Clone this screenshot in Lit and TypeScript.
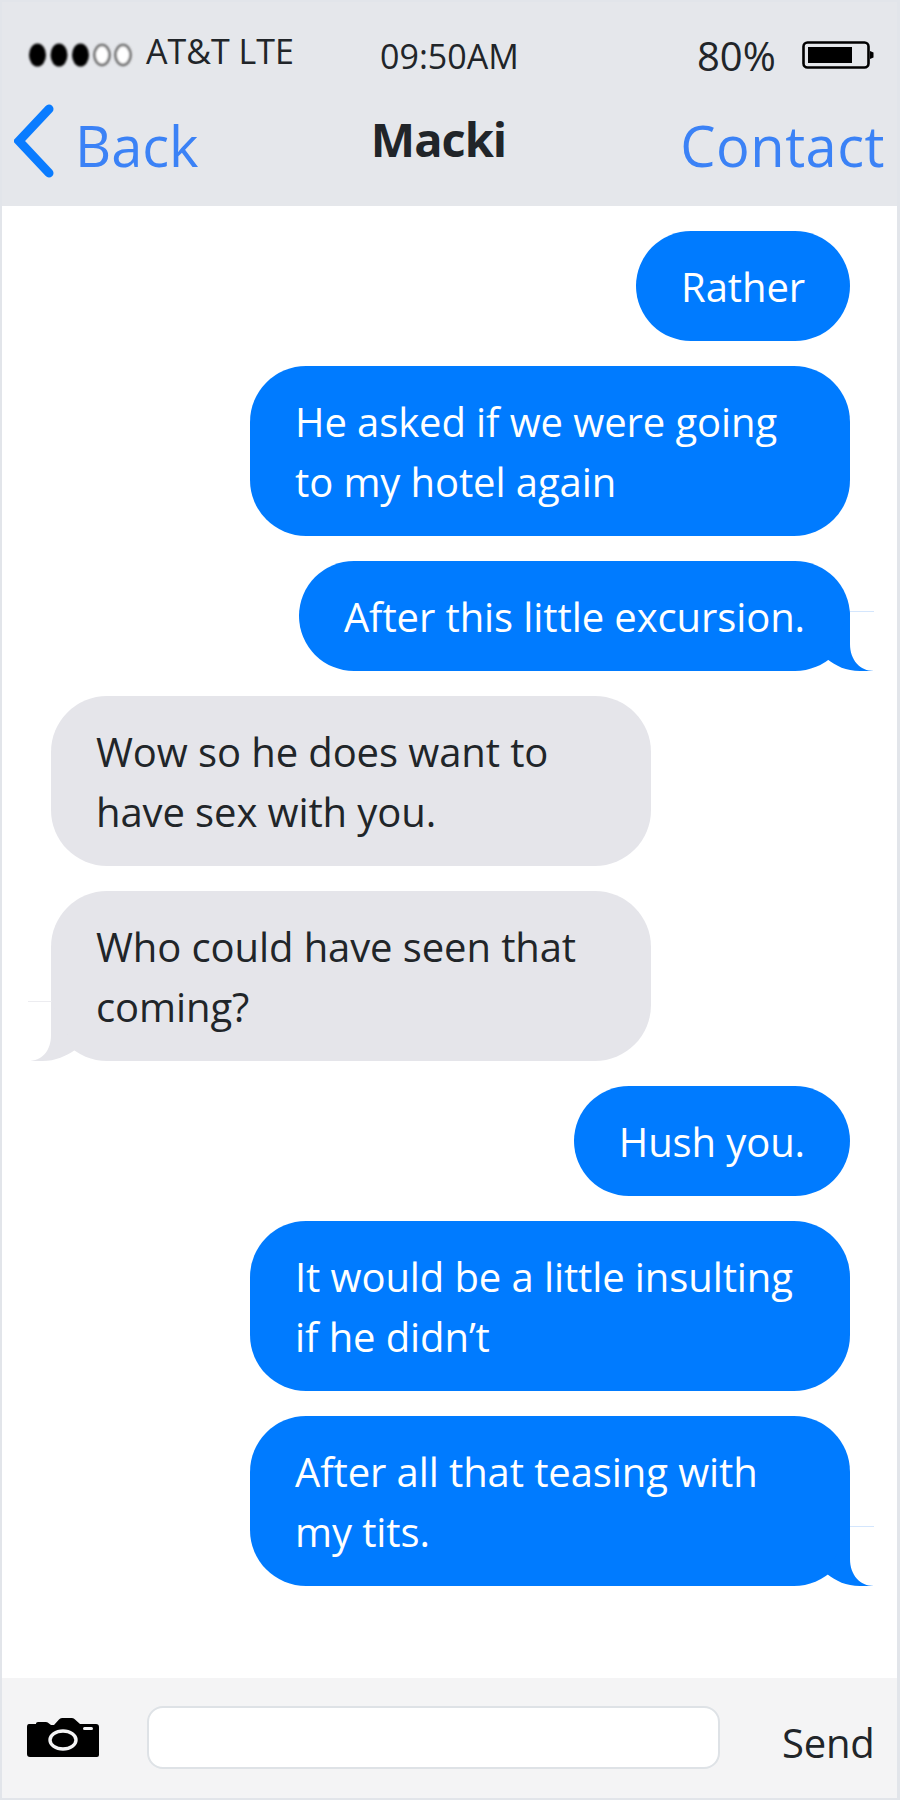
import { LitElement, html, css, svg } from 'lit';
import { customElement } from 'lit/decorators.js';

type Msg = { from: 'me' | 'them'; lines: string[]; tail?: boolean };

const messages: Msg[] = [
  { from: 'me', lines: ['Rather'] },
  { from: 'me', lines: ['He asked if we were going', 'to my hotel again'] },
  { from: 'me', lines: ['After this little excursion.'], tail: true },
  { from: 'them', lines: ['Wow so he does want to', 'have sex with you.'] },
  { from: 'them', lines: ['Who could have seen that', 'coming?'], tail: true },
  { from: 'me', lines: ['Hush you.'] },
  { from: 'me', lines: ['It would be a little insulting', 'if he didn’t'] },
  { from: 'me', lines: ['After all that teasing with', 'my tits.'], tail: true },
];

@customElement('app-root')
export class AppRoot extends LitElement {
  static styles = css`
    :host {
      display: block;
      width: 900px;
      height: 1800px;
      font-family: 'Open Sans', 'Noto Sans', sans-serif;
      color: #212529;
    }
    .phone {
      box-sizing: border-box;
      width: 900px;
      height: 1800px;
      border: 2px solid #e2e5ea;
      border-right-width: 3px;
      display: flex;
      flex-direction: column;
      background: #fff;
    }
    .header {
      height: 204px;
      flex: none;
      background: #e5e7eb;
      display: flex;
      flex-direction: column;
    }
    .status {
      height: 96px;
      display: grid;
      grid-template-columns: 350px 1fr 348px;
      align-items: center;
    }
    .carrier {
      display: flex;
      align-items: center;
      gap: 11px;
      padding-left: 25px;
      font-size: 34px;
      margin-top: 2px;
    }
    .carrier svg {
      margin-top: 8px;
    }
    .time {
      font-size: 34px;
      margin-left: 28px;
      margin-top: 12px;
    }
    .battery {
      display: flex;
      align-items: center;
      gap: 26px;
      font-size: 40px;
      padding-left: 148px;
      margin-top: 10px;
    }
    .nav {
      height: 108px;
      padding-top: 12px;
      box-sizing: border-box;
      display: grid;
      grid-template-columns: 1fr auto 1fr;
      align-items: start;
    }
    .back {
      display: flex;
      align-items: flex-start;
      gap: 21px;
      padding-left: 12px;
      color: #3b82f6;
      font-size: 56px;
      line-height: 70px;
    }
    .back svg {
      margin-top: -6px;
    }
    .title {
      font-size: 47px;
      font-weight: 700;
      line-height: 62px;
      letter-spacing: -1px;
      margin-left: -22px;
      margin-top: -2px;
    }
    .contact {
      text-align: right;
      color: #3b82f6;
      font-size: 56px;
      line-height: 70px;
      letter-spacing: 0.5px;
      padding-right: 12px;
    }
    .chat {
      flex: 1;
      display: flex;
      flex-direction: column;
      gap: 25px;
      padding: 25px 47px 0 49px;
    }
    .bubble {
      position: relative;
      box-sizing: border-box;
      padding: 26px 45px 24px;
      border-radius: 56px;
      font-size: 40px;
      line-height: 60px;
      letter-spacing: -0.1px;
      white-space: nowrap;
    }
    .bubble.wide {
      width: 600px;
    }
    .me {
      align-self: flex-end;
      background: #007bff;
      color: #fff;
    }
    .them {
      align-self: flex-start;
      background: #e5e5ea;
    }
    .tail {
      position: absolute;
      bottom: 0;
      width: 50px;
      height: 60px;
      display: block;
    }
    .me .tail {
      right: -24px;
    }
    .them .tail {
      left: -23px;
    }
    .footer {
      height: 120px;
      flex: none;
      background: #f4f4f5;
      display: flex;
      align-items: center;
      padding-left: 24px;
    }
    .camera {
      flex: none;
    }
    .input {
      box-sizing: border-box;
      width: 573px;
      height: 63px;
      margin-left: 47px;
      margin-bottom: 1px;
      background: #fff;
      border: 2px solid #dee2e6;
      border-radius: 16px;
    }
    .send {
      margin-left: 62px;
      margin-top: 8px;
      font-size: 40px;
      letter-spacing: -0.2px;
    }
  `;

  private dots() {
    const xs = [10.5, 32, 53.5, 75, 96];
    return html`<svg width="108" height="28" viewBox="0 0 108 28">
      <defs>
        <filter id="soft" x="-20%" y="-20%" width="140%" height="140%">
          <feGaussianBlur stdDeviation="1"></feGaussianBlur>
        </filter>
      </defs>
      <g filter="url(#soft)">
        ${xs.map((x, i) =>
          i < 3
            ? svg`<ellipse cx=${x} cy="14" rx="8.5" ry="11.5" fill="#000"></ellipse>`
            : svg`<ellipse cx=${x} cy="14" rx="7.5" ry="10" fill="#fff" stroke="#666" stroke-width="2.6"></ellipse>`
        )}
      </g>
    </svg>`;
  }

  private tail(from: 'me' | 'them') {
    // tip of the tail, plus the faint hairline left at its top edge
    if (from === 'me') {
      return html`<svg class="tail" viewBox="0 0 50 60">
        <path d="M26 0.5H50" stroke="#d4e6fd" stroke-width="1" fill="none"></path>
        <path
          d="M26 33C26 49 36 60 50 60H36C22 60 12 55 3 48L26 0Z"
          fill="#007bff"
        ></path>
      </svg>`;
    }
    return html`<svg class="tail" viewBox="0 0 50 60">
      <path d="M0 0.5H24" stroke="#ececf0" stroke-width="1" fill="none"></path>
      <path
        d="M23 34C23 50 14 60 0 60H14C28 60 38 55 47 49L23 0Z"
        fill="#e5e5ea"
      ></path>
    </svg>`;
  }

  render() {
    return html`
      <div class="phone">
        <div class="header">
          <div class="status">
            <div class="carrier">${this.dots()}<span>AT&amp;T LTE</span></div>
            <div class="time">09:50AM</div>
            <div class="battery">
              <span>80%</span>
              <svg width="72" height="28" viewBox="0 0 72 28">
                <rect x="1.5" y="1.5" width="65" height="25" rx="4" fill="none" stroke="#000" stroke-width="2.6"></rect>
                <rect x="6" y="6" width="44" height="16" fill="#000"></rect>
                <path d="M68 10L71.5 11.5V16.5L68 18Z" fill="#000"></path>
              </svg>
            </div>
          </div>
          <div class="nav">
            <div class="back">
              <svg width="40" height="74" viewBox="0 0 40 74">
                <path d="M35 5L5 37L35 69" fill="none" stroke="#0a7cff" stroke-width="9" stroke-linecap="round" stroke-linejoin="miter"></path>
              </svg>
              <span>Back</span>
            </div>
            <div class="title">Macki</div>
            <div class="contact">Contact</div>
          </div>
        </div>
        <div class="chat">
          ${messages.map(
            (m) => html`<div class="bubble ${m.from} ${m.lines.length > 1 ? 'wide' : ''}">
              ${m.lines.map((l, i) => html`${i ? html`<br />` : ''}${l}`)}
              ${m.tail ? this.tail(m.from) : ''}
            </div>`
          )}
        </div>
        <div class="footer">
          <svg class="camera" width="74" height="40" viewBox="0 0 74 40">
            <path
              d="M3 6H10V5.5Q10 4 12 4H20Q22 4 23 5.5L25 7H28L33 1.5Q34 0 36 0H46Q48 0 49 1.5L54 6H70Q73 6 73 9V37Q73 39 71 39H4Q1 39 1 36V9Q1 6 3 6Z"
              fill="#000"
            ></path>
            <ellipse cx="37" cy="22" rx="13" ry="9" fill="none" stroke="#f4f4f5" stroke-width="3.4"></ellipse>
            <rect x="57" y="9" width="10" height="3" rx="1.5" fill="#f4f4f5"></rect>
          </svg>
          <div class="input"></div>
          <div class="send">Send</div>
        </div>
      </div>
    `;
  }
}
